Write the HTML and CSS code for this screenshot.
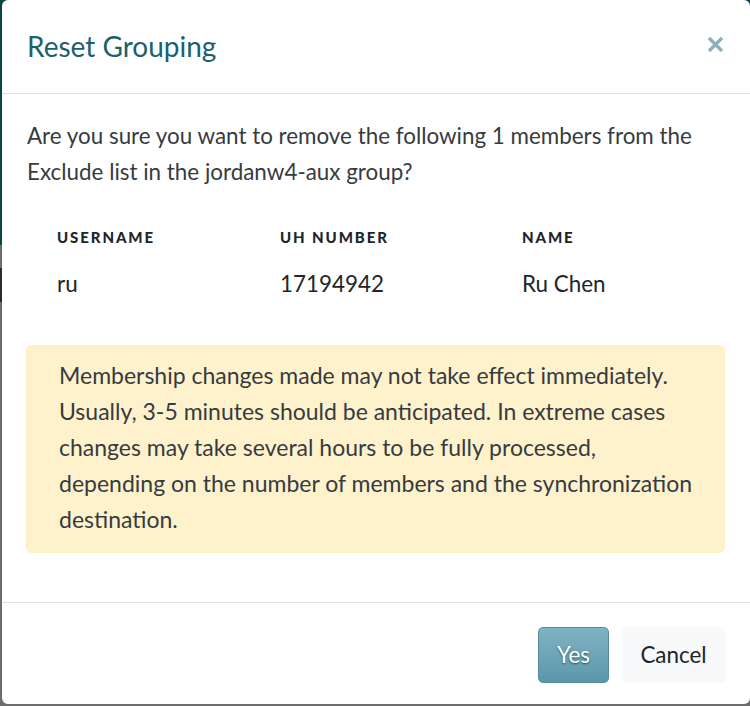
FILE: index.html
```html
<!DOCTYPE html>
<html lang="en">
<head>
<meta charset="utf-8">
<title>Reset Grouping</title>
<link rel="stylesheet" href="styles.css">
</head>
<body>
<div class="modal">
  <div class="modal-header">
    <h2 class="modal-title">Reset Grouping</h2>
    <button class="close" aria-label="Close">
      <svg width="17" height="17" viewBox="0 0 17 17"><path d="M2 2 L15 15 M15 2 L2 15" stroke="#8bb2bc" stroke-width="3.4" stroke-linecap="butt"/></svg>
    </button>
  </div>
  <div class="modal-body">
    <p class="question">Are you sure you want to remove the following 1 members from the Exclude list in the jordanw4-aux group?</p>
    <table class="members">
      <colgroup><col class="c1"><col class="c2"><col class="c3"></colgroup>
      <thead><tr><th>Username</th><th>UH Number</th><th>Name</th></tr></thead>
      <tbody><tr><td>ru</td><td>17194942</td><td>Ru Chen</td></tr></tbody>
    </table>
    <div class="alert">Membership changes made may not take effect immediately. Usually, 3-5 minutes should be anticipated. In extreme cases changes may take several hours to be fully processed, depending on the number of members and the synchronization destination.</div>
  </div>
  <div class="modal-footer">
    <button class="btn btn-yes">Yes</button>
    <button class="btn btn-cancel">Cancel</button>
  </div>
</div>
</body>
</html>
```
FILE: styles.css
```css
html, body { margin: 0; padding: 0; }
body {
  width: 750px;
  height: 706px;
  overflow: hidden;
  font-family: Lato, "Open Sans", sans-serif;
  color: #373b40;
  background: linear-gradient(to bottom, #0b4347 0, #0b4347 245px, #6d6d6d 245px, #6d6d6d 268px, #2b2b2b 268px, #2b2b2b 302px, #6d6d6d 302px);
}
.modal {
  margin-left: 2px;
  width: 748px;
  height: 704px;
  background: #fff;
  border-radius: 6px;
  display: flex;
  flex-direction: column;
  box-sizing: border-box;
}
.modal-header {
  height: 94px;
  box-sizing: border-box;
  padding: 24px 26px 24px 25px;
  border-bottom: 1px solid #dee2e6;
  display: flex;
  align-items: center;
  justify-content: space-between;
}
.modal-title {
  margin: 0;
  font-size: 28px;
  font-weight: 400;
  line-height: 45px;
  color: #1c5f6d;
}
.close {
  border: 0;
  background: none;
  padding: 0;
  width: 17px;
  height: 17px;
  display: flex;
  margin-top: -4px;
}
.modal-body {
  padding: 24px 25px 49px 24px;
  flex: none;
}
.question {
  margin: 0;
  font-size: 22.4px;
  line-height: 36px;
  padding-left: 1px;
}
.members {
  margin-top: 24px;
  width: 100%;
  border-collapse: collapse;
  table-layout: fixed;
}
.c1 { width: 223px; }
.c2 { width: 242px; }
.members th, .members td {
  padding: 0 0 0 31px;
  text-align: left;
  height: 46px;
  vertical-align: middle;
}
.members th {
  font-size: 15px;
  font-weight: 900;
  letter-spacing: 1.9px;
  text-transform: uppercase;
  color: #212529;
}
.members td {
  font-size: 22.4px;
  color: #212529;
}
.alert {
  margin-top: 39px;
  box-sizing: border-box;
  height: 208px;
  padding: 11px 23px 16px 32px;
  background: #fef2cc;
  border: 1px solid #fcefc1;
  border-radius: 6px;
  font-size: 23px;
  line-height: 36px;
  color: #373b40;
}
.modal-footer {
  border-top: 1px solid #dee2e6;
  padding: 24px 24px 21px;
  display: flex;
  justify-content: flex-end;
  gap: 12px;
}
.btn {
  font-family: Lato, "Open Sans", sans-serif;
  font-size: 22.4px;
  line-height: 36px;
  height: 56px;
  box-sizing: border-box;
  border-radius: 5px;
  padding: 9px 16px;
  cursor: pointer;
}
.btn-yes {
  width: 71px;
  color: #fff;
  background: linear-gradient(to bottom, #80b3c3, #5a97ab);
  border: 1px solid #5a8c9c;
  text-shadow: 0 1px 2px rgba(0,0,0,0.55);
}
.btn-cancel {
  width: 105px;
  color: #212529;
  background: #f8f9fa;
  border: 1px solid #f8f9fa;
}
```
